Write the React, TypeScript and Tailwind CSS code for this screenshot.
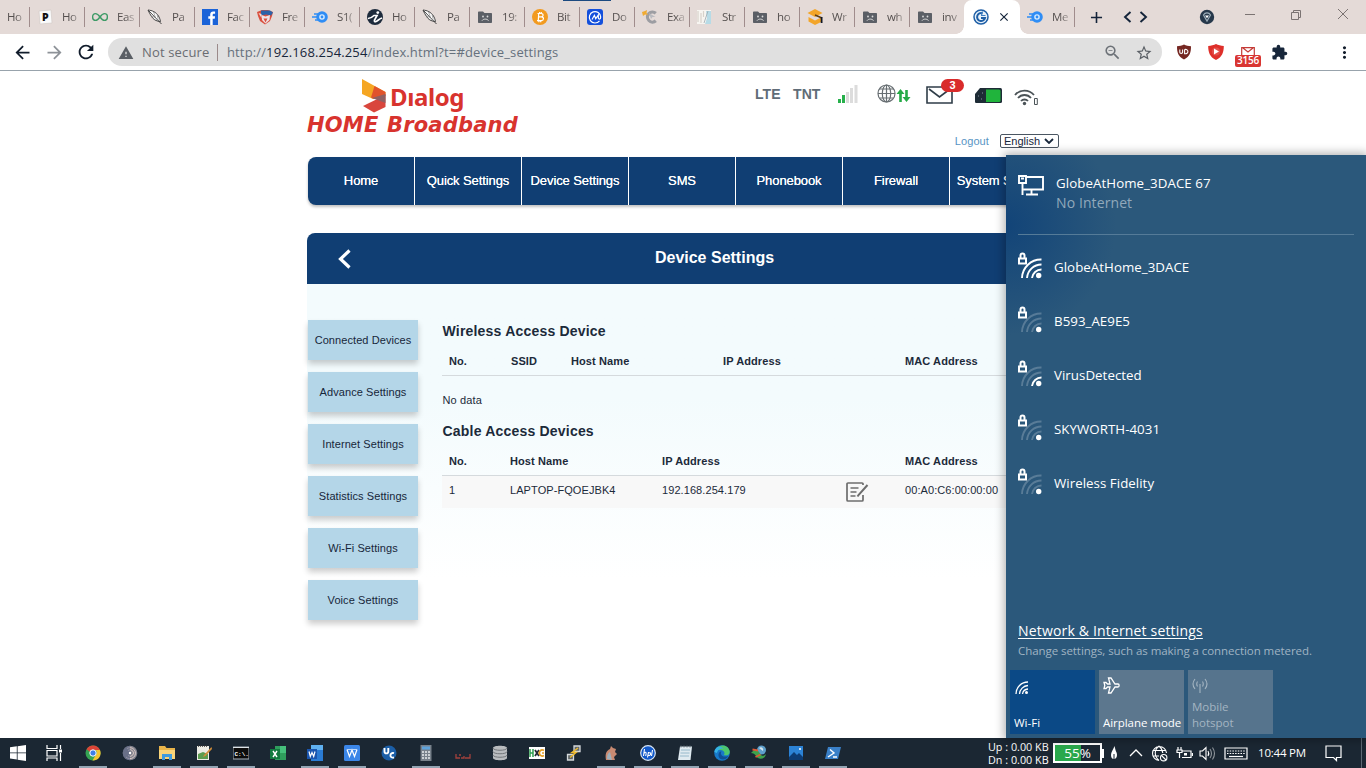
import React from "react";
import {
  MdAdd,
  MdArrowBack,
  MdArrowForward,
  MdClose,
  MdExtension,
  MdMoreVert,
  MdRefresh,
  MdStarBorder,
  MdWarning,
  MdZoomOut,
} from "react-icons/md";

type IconProps = { children: React.ReactNode };

const Icon16 = ({ children }: IconProps) => (
  <svg width="16" height="16" viewBox="0 0 16 16" className="block shrink-0">
    {children}
  </svg>
);

const PageFavicon = () => (
  <Icon16>
    <path d="M2 2l12-1 1 13-12 1z" fill="#fafafa" stroke="#cfc8c4" strokeWidth=".6" />
    <text x="5" y="12" fontSize="10.5" fontWeight="800" fill="#111" fontFamily="Open Sans, sans-serif">P</text>
  </Icon16>
);

const InfinityFavicon = () => (
  <Icon16>
    <path
      d="M8 8c-2-3-3.300-3.400-4.600-3.400C1.600 4.600.6 6.200.6 8s1 3.400 2.800 3.400C4.700 11.400 6 11 8 8s3.300-3.400 4.600-3.400c1.800 0 2.800 1.600 2.800 3.400s-1 3.400-2.800 3.400C11.300 11.400 10 11 8 8z"
      fill="none"
      stroke="#3d9a66"
      strokeWidth="1.400"
    />
  </Icon16>
);

const FeatherFavicon = () => (
  <Icon16>
    <path d="M1 1c4 .4 8 2 10.500 6 1 2 1.800 3.500 2 5.500C9 12.500 6 10 4.500 7.500 3 5.500 2 3 1 1z" fill="#fff" stroke="#444" />
    <path d="M1.500 1.500l13 13.500" stroke="#333" strokeWidth=".9" fill="none" />
    <path d="M6.500 3l2 5.500M10 5.500l1.300 5M4 7l4.500 1.500" stroke="#777" strokeWidth=".6" fill="none" />
  </Icon16>
);

const FacebookFavicon = () => (
  <Icon16>
    <rect width="16" height="16" fill="#1b63d8" />
    <path d="M8.200 16V9.800H6.300V7.200h1.900V5.500c0-2 1.200-3 3-3h1.900v2.300h-1.300c-.8 0-1.100.4-1.100 1.100v1.300h2.400l-.4 2.600h-2V16z" fill="#fff" />
  </Icon16>
);

const ShieldFavicon = () => (
  <Icon16>
    <path d="M0 3l5-2 6 0 5 2-1 4-2 5-5 3.500L3 12 1 7z" fill="#d9503f" />
    <path d="M4 1.500h9l3 2-2 3-5-1-5 1z" fill="#2d62a8" />
    <path d="M4.500 6l4 1.500L13 6l-.5 5-4 3.500L5 11z" fill="#efe3e6" />
    <path d="M6.500 9.500h4l-2 4z" fill="#d9503f" />
    <path d="M1.500 4l3 1v4z" fill="#f7dcd2" />
  </Icon16>
);

const CometFavicon = () => (
  <Icon16>
    <circle cx="10" cy="8" r="4.300" fill="#d8ecff" stroke="#2f8df5" strokeWidth="3" />
    <path d="M0 8h6M2 5h5M3 11h5" stroke="#2f8df5" strokeWidth="1.500" />
    <circle cx="10" cy="8" r="1.400" fill="#2f8df5" />
  </Icon16>
);

const RunnerFavicon = () => (
  <Icon16>
    <circle cx="8" cy="8" r="8" fill="#1d2b3c" />
    <path d="M1 9.500c3 0 4.500-1.500 6-3h3L7.500 11c-.5 1.500.5 2 1.500 1.500 2-.8 3.500-3 6-3.500" stroke="#fff" strokeWidth="1.700" fill="none" />
    <circle cx="10.800" cy="3.600" r="1.400" fill="#fff" />
  </Icon16>
);

const FolderFavicon = () => (
  <Icon16>
    <path d="M1 3.500C1 2.700 1.500 2.400 2 2.400h4l1.500 1.600H14c.7 0 1 .4 1 1V13c0 .6-.4 1-1 1H2c-.6 0-1-.4-1-1z" fill="#5b5f66" />
    <circle cx="6" cy="7.500" r=".9" fill="#ddd" />
    <circle cx="10.500" cy="7.500" r=".9" fill="#ddd" />
    <path d="M5 11.600c1.500-2 5-2 6.500 0" stroke="#ddd" fill="none" />
  </Icon16>
);

const BitcoinFavicon = () => (
  <Icon16>
    <circle cx="8" cy="8" r="8" fill="#f29a1f" />
    <path d="M5.500 4.500h3.800c2.400 0 2.300 3.300 0 3.400H6.600M8 7.900h1.600c2.600 0 2.400 3.700-.2 3.700H5M6.700 4.500l-.4 7M7.600 3v1.500M9.300 3v1.500M6.900 11.600v1.600M8.700 11.600v1.600" stroke="#fff" strokeWidth="1.200" fill="none" />
  </Icon16>
);

const MailAtFavicon = () => (
  <Icon16>
    <rect width="16" height="16" rx="3" fill="#1450dc" />
    <path d="M12.500 11.800A5.700 5.700 0 1 1 13.700 8c0 2.800-2.400 2.500-2.400.5V6L8.700 9.800 7.400 6.300 5 10.500" stroke="#fff" strokeWidth="1.200" fill="none" />
  </Icon16>
);

const CursorFavicon = () => (
  <Icon16>
    <path d="M13.800 4.300A5 5 0 1 0 13.800 11.800" stroke="#9c9da2" strokeWidth="3.200" fill="none" />
    <path d="M0 3l3-1 2-1-.5 3L6 6 3 5.500 1 7z" fill="#f0ab32" />
    <path d="M7 4l2 6 1.500-2 3 0z" fill="#b9babf" />
  </Icon16>
);

const StripesFavicon = () => (
  <Icon16>
    <rect x="0" y="1" width="14" height="14" fill="#f7f5f1" />
    <path d="M1 2v11M4 4v10M6.500 2v6" stroke="#d7d2cb" strokeWidth="1.200" />
    <path d="M9 2h5v13H8l2-6z" fill="#b7dbe6" />
    <path d="M7 14l4-12" stroke="#9aa7ad" strokeWidth=".8" />
  </Icon16>
);

const GraduationFavicon = () => (
  <Icon16>
    <path d="M8 0l7.500 4L8 8 .5 4z" fill="#f3a529" />
    <path d="M1.500 8L8 11.500 14 8.500V13l-6 3-6.500-3.500z" fill="#f3a529" />
    <path d="M8 6l7 3" stroke="#5c3d16" strokeWidth="1.600" />
    <path d="M14.600 8v6" stroke="#111827" strokeWidth="1.800" />
  </Icon16>
);

const RouterFavicon = () => (
  <Icon16>
    <circle cx="8" cy="8" r="7" fill="#e9f2fa" stroke="#1f5fa6" strokeWidth="1.500" />
    <path d="M9.500 4.300A4 4 0 1 0 12 9H8" stroke="#1f5fa6" strokeWidth="2" fill="none" />
    <path d="M8 6.500h4.500M9.500 2.500L8.500 6" stroke="#3f7fc2" strokeWidth="1.200" />
  </Icon16>
);

const TABS = [
  { label: "Ho", icon: null },
  { label: "Ho", icon: <PageFavicon /> },
  { label: "Eas", icon: <InfinityFavicon /> },
  { label: "Pa", icon: <FeatherFavicon /> },
  { label: "Fac", icon: <FacebookFavicon /> },
  { label: "Fre", icon: <ShieldFavicon /> },
  { label: "S1(", icon: <CometFavicon /> },
  { label: "Ho", icon: <RunnerFavicon /> },
  { label: "Pa", icon: <FeatherFavicon /> },
  { label: "19:", icon: <FolderFavicon /> },
  { label: "Bit", icon: <BitcoinFavicon /> },
  { label: "Do", icon: <MailAtFavicon /> },
  { label: "Exa", icon: <CursorFavicon /> },
  { label: "Str", icon: <StripesFavicon /> },
  { label: "ho", icon: <FolderFavicon /> },
  { label: "Wr", icon: <GraduationFavicon /> },
  { label: "wh", icon: <FolderFavicon /> },
  { label: "inv", icon: <FolderFavicon /> },
];

type TabProps = { label: string; icon: React.ReactNode; last?: boolean };

const Tab = ({ label, icon, last }: TabProps) => (
  <div className="relative flex h-[34px] w-[55px] shrink-0 items-center">
    <div className="ml-[8px] w-4">{icon}</div>
    <span className="ml-[9px] w-[20px] whitespace-nowrap text-[11.500px] tracking-[-0.4px] text-[#55504f] [mask-image:linear-gradient(to_right,black_8px,rgba(0,0,0,0.3)_17px)]">
      {label}
    </span>
    {!last && <div className="absolute top-[7px] -right-px h-5 w-px bg-[#a08c8c]" />}
  </div>
);

const TabStrip = () => (
  <div className="relative flex h-[34px] items-center overflow-hidden bg-[#e4dad7]">
    <div className="absolute top-0 left-[563px] h-px w-12 bg-[#1c4a80]" />
    <div className="-ml-[26px] flex">
      {TABS.map((tab, index) => (
        <Tab key={index} label={tab.label} icon={tab.icon} last={index === 17} />
      ))}
      <div className="relative flex h-[34px] w-[56px] items-center rounded-t-lg bg-white">
        <div className="absolute bottom-0 -left-2 size-2 bg-[radial-gradient(circle_at_0_0,transparent_7.500px,white_8px)]" />
        <div className="absolute -right-2 bottom-0 size-2 bg-[radial-gradient(circle_at_100%_0,transparent_7.500px,white_8px)]" />
        <div className="ml-[9px]">
          <RouterFavicon />
        </div>
        <MdClose className="ml-[8px] size-[14px] text-[#14243a]" />
      </div>
      <div className="-ml-px flex">
        <Tab label="Me" icon={<CometFavicon />} />
      </div>
    </div>
    <MdAdd className="ml-[13px] size-[19px] text-[#14243a]" />
    <svg width="25" height="12" viewBox="0 0 25 12" className="ml-[17px]" fill="none" stroke="#14243a" strokeWidth="1.900">
      <path d="M7.500 1L2 6l5.500 5M17.500 1L23 6l-5.500 5" />
    </svg>
    <svg width="16" height="16" viewBox="0 0 16 16" className="ml-[51px]">
      <circle cx="8" cy="8" r="7.200" fill="#26384b" />
      <path d="M4.500 6A4 4 0 0 1 11.500 6L8 12z" fill="none" stroke="#9cadb9" strokeWidth="1.200" />
      <path d="M6 6.500h4l-2 2.800z" fill="#fff" />
    </svg>
    <svg width="106" height="14" viewBox="0 0 106 14" className="-mt-1 ml-[30px]" fill="none" stroke="#7b7372">
      <path d="M0 6.500h10M46.500 4.500h7v7h-7zM48.500 4.500v-2h7v7h-2M93 1l10 10M103 1L93 11" />
    </svg>
  </div>
);

const Toolbar = () => (
  <div className="flex h-[37px] items-center border-b border-[#98a3ac] bg-white">
    <MdArrowBack className="ml-[12px] size-[21px] text-[#111c2b]" />
    <MdArrowForward className="ml-[11px] size-[21px] text-[#8d9298]" />
    <MdRefresh className="ml-[10px] size-[22px] text-[#111c2b]" />
    <div className="ml-[11px] flex h-7 w-[1054px] items-center rounded-full bg-[#e0e0e0] pt-px text-[13px]">
      <MdWarning className="ml-[10px] size-4 text-[#5a5f65]" />
      <span className="ml-[8px] w-[67px] whitespace-nowrap tracking-[0.15px] text-[#6a6d72]">Not secure</span>
      <div className="ml-[8px] h-[17px] w-px bg-[#9b8a8a]" />
      <span className="ml-[9px] whitespace-nowrap tracking-[0.13px] text-[#66717d]">
        http://<span className="text-[#17263a]">192.168.254.254</span>/index.html?t=#device_settings
      </span>
      <MdZoomOut className="mr-[13px] ml-auto size-[19px] text-[#6c7177]" />
      <MdStarBorder className="mr-[9px] size-[18px] text-[#5a5f65]" />
    </div>
    <svg width="16" height="16" viewBox="0 0 16 16" className="ml-[14px]">
      <path d="M8 .5c2 1.200 4.500 1.600 7 1.700 0 6-1 10.300-7 13.300-6-3-7-7.300-7-13.300 2.500-.1 5-.5 7-1.700z" fill="#752722" />
      <path d="M3.800 5.500v2.700c0 1.600 2.800 1.600 2.800 0V5.500M8.600 5.500v4.200c4.400.8 4.400-5 0-4.200" stroke="#fff" strokeWidth="1.100" fill="none" />
    </svg>
    <svg width="16" height="16" viewBox="0 0 16 16" className="ml-4">
      <path d="M8 0c2 1.200 5 1.800 7.800 2 0 6-1.500 11-7.800 14C1.700 13 .2 8 .2 2 3 1.800 6 1.200 8 0z" fill="#de2f2a" />
      <circle cx="8" cy="7.500" r="4" fill="#fff" opacity=".15" />
      <path d="M6 4.500l5 3-5 3z" fill="#fff" />
    </svg>
    <div className="mt-[9px] ml-[11px] flex h-[20px] w-[26px] flex-col items-center">
      <svg width="14" height="8" viewBox="0 0 14 8" className="shrink-0">
        <path d="M.7 8V.7h12.600V8M2 1l5 4 5-4" stroke="#c43a36" strokeWidth="1.200" fill="none" />
      </svg>
      <span className="flex h-[12px] w-[26px] items-center justify-center rounded-[2px] bg-[#d93632] text-[10px] font-semibold tracking-[-0.2px] text-white">
        3156
      </span>
    </div>
    <MdExtension className="ml-[10px] size-[17px] text-[#17263a]" />
    <MdMoreVert className="ml-[47px] size-[19px] text-[#111c2b]" />
  </div>
);

const NAV_ITEMS = ["Home", "Quick Settings", "Device Settings", "SMS", "Phonebook", "Firewall", "System Settings"];

const SIDE_ITEMS = [
  "Connected Devices",
  "Advance Settings",
  "Internet Settings",
  "Statistics Settings",
  "Wi-Fi Settings",
  "Voice Settings",
];

const Logo = () => (
  <div className="w-[230px] pt-[8px] text-[#d8332e]">
    <div className="flex h-[34px] items-start pl-[54px]">
      <svg width="26" height="34" viewBox="0 0 26 34">
        <path d="M1 0l23.500 13v3L12 20 1 15z" fill="#f5a623" />
        <path d="M13.500 7l11 6v4L13 20l-3-1.500z" fill="#e1532c" />
        <path d="M24.500 16v12L13 33.500 2 27z" fill="#d9463d" />
        <path d="M24.500 15v9L11 19z" fill="#8f6063" />
      </svg>
      <span className="ml-[3px] font-['Noto_Sans'] text-[24px] leading-[36px] font-bold tracking-[-0.400px]">Dıalog</span>
    </div>
    <div className="font-['DejaVu_Sans'] text-[21px] leading-[24px] font-bold tracking-[0.2px] [word-spacing:1px] whitespace-nowrap italic">
      HOME Broadband
    </div>
  </div>
);

const StatusIcons = () => (
  <div className="flex h-[30px] items-start text-[14px] font-bold text-[#606c77]">
    <span className="mt-[4px] w-[38px] leading-5 tracking-[0.1px]">LTE</span>
    <span className="mt-[4px] w-[45px] leading-5 tracking-[0.1px]">TNT</span>
    <svg width="20" height="19" viewBox="0 0 20 19" className="mt-[4px]">
      <path d="M0 15h3v4H0zM4 11h3v8H4z" fill="#27b04b" />
      <path d="M8 8h3v11H8zM12 4h3v15h-3zM16.500 1h3v18h-3z" fill="#dcdcdc" />
    </svg>
    <svg width="34" height="20" viewBox="0 0 34 20" className="mt-[4px] ml-[19px]" fill="none">
      <g stroke="#686f73" strokeWidth="1.200">
        <circle cx="9.500" cy="9.500" r="8.500" />
        <ellipse cx="9.500" cy="9.500" rx="4.200" ry="8.500" />
        <path d="M9.500 1v17M1 9.500h17M2.500 5h14M2.500 14h14" />
      </g>
      <path d="M23.500 18V8M29.500 6v10" stroke="#25aa46" strokeWidth="2.600" />
      <path d="M19.500 10l4-5 4 5zM25.500 13l4 5 4-5z" fill="#25aa46" />
    </svg>
    <div className="relative ml-[15px] h-[22px] w-[27px]">
      <svg width="27" height="18" viewBox="0 0 27 18" className="mt-[6px]" fill="none" stroke="#2f3d48" strokeWidth="1.600">
        <path d="M1 1h25v16H1zM3 3l10.500 8L24 3" />
      </svg>
      <span className="absolute -top-[1px] left-[15px] flex h-[13px] w-[23px] items-center justify-center rounded-full bg-[#d92b2b] text-[11px] text-white">
        3
      </span>
    </div>
    <svg width="29" height="17" viewBox="0 0 29 17" className="mt-[7px] ml-[21px]">
      <path d="M6 1h20.500Q28 1 28 3v11.500q0 1.500-1.500 1.500H2Q1 16 1 14.500V7z" fill="#1e2c36" />
      <path d="M12 2.500h13q1.500 0 1.500 1.500v9.500q0 1.500-1.500 1.500H12z" fill="#20b43c" />
      <path d="M4 9h1M8 6h1M7 12h1" stroke="#8494a0" />
    </svg>
    <svg width="25" height="18" viewBox="0 0 25 18" className="mt-[9px] ml-[11px]" fill="none" stroke="#4b5357" strokeWidth="1.800">
      <path d="M1 6a12.500 12.500 0 0 1 19 0M4 9a8.500 8.500 0 0 1 13 0M7 12a4.800 4.800 0 0 1 7 0" />
      <circle cx="10.500" cy="14.500" r="1.700" fill="#4b5357" stroke="none" />
      <path d="M20.500 9.500h2.800v6h-2.800z" strokeWidth="1" />
    </svg>
  </div>
);

const DeviceTables = () => (
  <div className="mt-[36px] ml-[24px] w-[672px] text-[11px] text-[#1c2a3a]">
    <h2 className="ml-[0.500px] h-[22px] text-[14px] leading-[22px] font-bold tracking-[0.200px]">Wireless Access Device</h2>
    <div className="mt-[8px] grid h-[26px] grid-cols-[62px_60px_152px_182px_1fr] border-b border-[#d5dadd] pl-[7px] leading-[22px] font-bold tracking-[0.1px]">
      <span>No.</span>
      <span>SSID</span>
      <span>Host Name</span>
      <span>IP Address</span>
      <span>MAC Address</span>
    </div>
    <p className="mt-[13px] ml-[0.500px] h-[22px] leading-[22px] tracking-[0.150px]">No data</p>
    <h2 className="mt-[9px] ml-[0.500px] h-[22px] text-[14px] leading-[22px] font-bold tracking-[0.200px]">Cable Access Devices</h2>
    <div className="mt-[8px] grid h-[26px] grid-cols-[61px_152px_243px_1fr] border-b border-[#d5dadd] pl-[7px] leading-[22px] font-bold tracking-[0.1px]">
      <span>No.</span>
      <span>Host Name</span>
      <span>IP Address</span>
      <span>MAC Address</span>
    </div>
    <div className="grid h-[32px] grid-cols-[61px_152px_183px_60px_1fr] bg-[#f8f8f8] pl-[7px] leading-[29px] tracking-[0.080px]">
      <span>1</span>
      <span>LAPTOP-FQOEJBK4</span>
      <span>192.168.254.179</span>
      <svg width="23" height="20" viewBox="0 0 23 20" className="mt-[6px] ml-px" fill="none" stroke="#6d6d6d" strokeWidth="1.700">
        <path d="M17 3V2q0-1-1-1H2Q1 1 1 2v16q0 1 1 1h14q1 0 1-1v-5" />
        <path d="M4.500 6h8M4.500 10h6M4.500 14h5" strokeWidth="1.400" />
        <path d="M21.500 3l-9 10-1 1.500" strokeWidth="2" />
      </svg>
      <span>00:A0:C6:00:00:00</span>
    </div>
  </div>
);

const RouterPage = () => (
  <main className="h-full bg-white pl-[307px] font-['Liberation_Sans',sans-serif]">
    <div className="flex h-[60px] w-[755px]">
      <Logo />
      <div className="ml-[218px] pt-[9px]">
        <StatusIcons />
      </div>
    </div>
    <div className="flex h-[26px] w-[752px] items-start justify-end pt-[3px] text-[11px]">
      <a className="-mt-px mr-[11px] leading-[16px] tracking-[0.1px] text-[#5794c4]">Logout</a>
      <div className="flex h-[14px] w-[59px] items-center rounded-[2px] border border-[#4b5662] pl-[3px] text-[#17263a]">
        English
        <svg width="10" height="6" viewBox="0 0 10 6" className="ml-[4px]" fill="none" stroke="#17263a" strokeWidth="1.800">
          <path d="M1 1l4 4 4-4" />
        </svg>
      </div>
    </div>
    <nav className="ml-[1px] flex h-[48px] w-[814px] overflow-hidden rounded-lg bg-[#103e73] shadow-[0_2px_3px_rgba(0,0,0,0.25)]">
      {NAV_ITEMS.map((item) => (
        <div key={item} className="flex h-full w-[107px] shrink-0 justify-center border-r border-white text-[13px] leading-[47px] font-normal tracking-[-0.1px] whitespace-nowrap text-white [text-shadow:0_0_0.5px_white]">
          {item}
        </div>
      ))}
    </nav>
    <section className="mt-[28px] w-[815px]">
      <div className="flex h-[51px] items-center rounded-t-lg bg-[#103e73] text-white">
        <svg width="13" height="20" viewBox="0 0 13 20" className="ml-[31px] w-[13px]" fill="none" stroke="white" strokeWidth="3.200">
          <path d="M11.500 1.500L2.500 10l9 8.500" />
        </svg>
        <h1 className="mr-[44px] -mt-[1px] flex-1 text-center text-[16px] font-bold">Device Settings</h1>
      </div>
      <div className="flex h-[454px] bg-linear-to-b from-[#f3fbfd] from-25% to-white to-65%">
        <div className="mt-[36px] ml-[1px] flex w-[110px] flex-col gap-3">
          {SIDE_ITEMS.map((item) => (
            <div key={item} className="h-[40px] bg-[#b4d6e8] text-center text-[11px] leading-[40px] tracking-[0.080px] whitespace-nowrap text-[#17263a] shadow-[0_4px_6px_rgba(0,0,0,0.2)]">
              {item}
            </div>
          ))}
        </div>
        <DeviceTables />
      </div>
    </section>
  </main>
);

type NetworkIconProps = { bars: number };

const NetworkIcon = ({ bars }: NetworkIconProps) => (
  <svg width="25" height="28" viewBox="0 0 25 28" className="-mt-[3px]" fill="none" stroke="white" strokeWidth="1.900">
    <path d="M1 6.500h7v5H1zM2.500 6V3.500a2 2 0 0 1 4 0V6" strokeWidth="2" />
    <path d="M4 26A19 19 0 0 1 23.500 7.500" opacity={bars > 2 ? 1 : 0.22} />
    <path d="M9 26A14.500 14.500 0 0 1 23.500 12.500" opacity={bars > 1 ? 1 : 0.22} />
    <path d="M14 26A9.500 9.500 0 0 1 23.500 17.500" opacity={bars > 0 ? 1 : 0.22} />
    <circle cx="20.700" cy="23.500" r="2.700" fill="white" stroke="none" />
  </svg>
);

const NETWORKS = [
  { name: "GlobeAtHome_3DACE", bars: 3 },
  { name: "B593_AE9E5", bars: 0 },
  { name: "VirusDetected", bars: 1 },
  { name: "SKYWORTH-4031", bars: 0 },
  { name: "Wireless Fidelity", bars: 0 },
];

const NetworkPanel = () => (
  <aside className="absolute top-[155px] left-[1006px] flex h-[583px] w-[360px] flex-col bg-[#2b587b] bg-[radial-gradient(circle_at_0_70px,#124478_0,#2b587b_110px)] text-[13.300px] text-white shadow-[0_0_9px_2px_rgba(0,0,0,0.3)]">
    <div className="mx-3 flex h-[80px] border-b border-[#557b98] pt-[18px]">
      <svg width="26" height="21" viewBox="0 0 26 21" className="mt-[2px]" fill="none" stroke="white" strokeWidth="1.900">
        <path d="M8 2h17v12.500H5.500M13.500 15v4M8 19.500h12M1 1h7v7H1zM4.500 8v12M3 3.500h3" />
      </svg>
      <div className="ml-[12px]">
        <p className="leading-[20px] tracking-[0.07px]">GlobeAtHome_3DACE 67</p>
        <p className="text-[14px] leading-[20px] tracking-[0.1px] text-[#91a9bb]">No Internet</p>
      </div>
    </div>
    <div className="mt-[5px] flex-1 pl-3">
      {NETWORKS.map((network) => (
        <div key={network.name} className="flex h-[54px] items-center">
          <NetworkIcon bars={network.bars} />
          <span className="mt-[2px] ml-[11px] tracking-[0.04px]">{network.name}</span>
        </div>
      ))}
    </div>
    <div className="h-[48px] pl-3">
      <p className="text-[14px] leading-[20px] tracking-[0.17px] underline underline-offset-2">Network &amp; Internet settings</p>
      <p className="text-[11.500px] leading-[20px] tracking-[-0.06px] whitespace-nowrap text-[#a0b4c3]">
        Change settings, such as making a connection metered.
      </p>
    </div>
    <div className="mt-px mb-[4px] flex h-[64px] shrink-0 gap-1 pl-1 text-[11.500px] leading-[16px]">
      <div className="flex w-[85px] flex-col justify-between bg-[#0b4986] px-1 pt-[11px] pb-[3px]">
        <svg width="15" height="14" viewBox="0 0 15 14" className="ml-[1px]" fill="none" stroke="white" strokeWidth="1.300">
          <path d="M1 13A12 12 0 0 1 13 1M4.500 13A9 9 0 0 1 13 4.500M7.500 13A6 6 0 0 1 13 8" />
          <circle cx="11.500" cy="11.500" r="1.500" fill="white" stroke="none" />
        </svg>
        Wi-Fi
      </div>
      <div className="flex w-[85px] flex-col justify-between bg-[#5c778e] px-1 pt-[7px] pb-[3px] whitespace-nowrap">
        <svg width="17" height="17" viewBox="0 0 17 17" fill="none" stroke="white" strokeWidth="1.300">
          <path d="M1 5.500h2l1.500 1.500H7L5.500 1H8l4 6h3c1.500 0 1.500 3 0 3h-3l-4 6H5.500L7 10H4.500L3 11.500H1l.8-3z" />
        </svg>
        <span className="tracking-[-0.04px]">Airplane mode</span>
      </div>
      <div className="flex w-[85px] flex-col justify-between bg-[#56748d] px-1 pt-[8px] pb-[3px] text-[#a4b5c2]">
        <svg width="16" height="15" viewBox="0 0 16 15" fill="none" stroke="#a4b5c2" strokeWidth="1.100">
          <path d="M8 6v9M5.500 3.500q-1.500 2.500 0 5M10.500 3.500q1.500 2.500 0 5M3 1q-4 5 0 10M13 1q4 5 0 10" />
        </svg>
        <span>
          Mobile
          <br />
          hotspot
        </span>
      </div>
    </div>
  </aside>
);

const TASKBAR_APPS = [
  {
    running: true,
    icon: (
      <>
        <circle cx="8" cy="8" r="7.500" fill="#35a352" />
        <path d="M8 .5A7.500 7.500 0 0 1 15 5H8a3 3 0 0 0-2.800 2L1.500 4.300A7.500 7.500 0 0 1 8 .5z" fill="#dc4437" />
        <path d="M15 5a7.500 7.500 0 0 1-7.500 10.500L11 9.500A3 3 0 0 0 10.500 5z" fill="#f4c430" />
        <circle cx="8" cy="8" r="3.200" fill="#3f7fe8" stroke="#fff" />
      </>
    ),
  },
  {
    running: false,
    icon: (
      <>
        <circle cx="8" cy="8" r="7.300" fill="#84848f" />
        <path d="M5 3.500a5.500 5.500 0 1 1-1 8.500M6 5.500a3.300 3.300 0 1 1 0 5" stroke="#d9c8c2" fill="none" />
        <path d="M8 .7A7.300 7.300 0 0 0 8 15.300z" fill="#4d5b82" opacity=".5" />
        <circle cx="8" cy="8" r="1.200" fill="#fff" />
      </>
    ),
  },
  {
    running: true,
    icon: (
      <>
        <path d="M0 1h6l1.500 2H16v11H0z" fill="#e9b44a" />
        <path d="M0 5h16v9H0z" fill="#f8d47a" />
        <path d="M3 15V9h10v6h-3v-3H6v3z" fill="#3e9be0" />
      </>
    ),
  },
  {
    running: true,
    icon: (
      <>
        <path d="M1 1h12v14H1z" fill="#ecebe4" />
        <path d="M2 1h10" stroke="#333" strokeWidth="1.500" strokeDasharray="1 1" />
        <path d="M2 9l5-2 5 2v5H2z" fill="#5c9c4f" />
        <path d="M15.500 2L8 10l-1 2 2.500-1L16 4z" fill="#d18d3a" />
      </>
    ),
  },
  {
    running: true,
    icon: (
      <>
        <path d="M0 2h16v12H0z" fill="#0c0c0c" stroke="#aab3bb" />
        <path d="M0 2.500h16" stroke="#dde3e8" />
        <text x="1.500" y="11" fontSize="6" fontWeight="700" fill="#fff" fontFamily="Liberation Mono, monospace">C:\.</text>
      </>
    ),
  },
  {
    running: false,
    icon: (
      <>
        <path d="M5 1h11v14H5z" fill="#2f9d5c" />
        <path d="M10 1h6v7h-6z" fill="#46c07c" />
        <path d="M0 4h10v10H0z" fill="#127a3f" />
        <path d="M3 6l4 6M7 6l-4 6" stroke="#fff" strokeWidth="1.400" />
      </>
    ),
  },
  {
    running: true,
    icon: (
      <>
        <path d="M4 0h12v16H4z" fill="#2a7bd4" />
        <path d="M4 0h12v5H4z" fill="#5fb0f0" />
        <path d="M0 4h10v10H0z" fill="#1a55ae" />
        <path d="M2 6.500l1.300 5L5 7.500l1.700 4L8 6.500" stroke="#fff" strokeWidth="1.200" fill="none" />
      </>
    ),
  },
  {
    running: true,
    icon: (
      <>
        <rect width="16" height="16" rx="1.500" fill="#3b86e8" />
        <path d="M3 4.500l2.500 7L8 5l2.500 6.500 2.500-7" stroke="#fff" strokeWidth="1.200" fill="none" />
        <path d="M3 4.500h10" stroke="#bcd7fa" />
      </>
    ),
  },
  {
    running: false,
    icon: (
      <>
        <circle cx="8" cy="8" r="7.500" fill="#1b5ea7" />
        <path d="M3.500 3v3.500c0 2.500 3.800 2.500 3.800 0V3M13 8.200c-4.500-1.500-5 5.500 0 4.300" stroke="#fff" strokeWidth="1.900" fill="none" />
      </>
    ),
  },
  {
    running: true,
    icon: (
      <>
        <path d="M2.500 0h11v16h-11z" fill="#77818b" />
        <path d="M4 1.500h8v3H4z" fill="#5ea3dc" />
        <path d="M4 7h8M4 10h8M4 13h8" stroke="#e7ebee" strokeWidth="1.700" strokeDasharray="2 1" />
      </>
    ),
  },
  {
    running: false,
    icon: (
      <path d="M1 9v4h4M6 13h3v-2M10 13h5V9M4 10h2" stroke="#a3413d" strokeWidth="1.300" fill="none" />
    ),
  },
  {
    running: false,
    icon: (
      <>
        <path d="M1 3c0-3 14-3 14 0v10c0 3-14 3-14 0z" fill="#b9bcbf" />
        <path d="M1 3c0 3 14 3 14 0M1 6.500c0 3 14 3 14 0M1 10c0 3 14 3 14 0" stroke="#73777b" fill="none" />
      </>
    ),
  },
  {
    running: false,
    icon: (
      <>
        <path d="M0 2h16v12H0z" fill="#fff" />
        <path d="M1 4v8M4 4v8M1 8h3" stroke="#2f9e4f" strokeWidth="1.500" />
        <path d="M6 5l4 6M10 5l-4 6" stroke="#232a33" strokeWidth="1.800" />
        <path d="M15 5.500a3 3 0 1 0 0 5M13 8h2" stroke="#e7a025" strokeWidth="1.700" fill="none" />
      </>
    ),
  },
  {
    running: false,
    icon: (
      <>
        <path d="M8 1h6v5.500H8zM1.500 9.500h6V15h-6z" fill="#5d6468" stroke="#d5d9dc" strokeWidth="1.300" />
        <path d="M12 3L6 7.500h4L4 12.500" stroke="#edb92e" strokeWidth="1.500" fill="none" />
      </>
    ),
  },
  {
    running: true,
    icon: (
      <>
        <path d="M3 15C2 9 3 6 7 4l1-3 2 2 3 1-1 3 2 2-3 3 1 3z" fill="#c88a72" />
        <path d="M4 14c0-4 1-6 3-7l2 8z" fill="#9fb0bb" />
      </>
    ),
  },
  {
    running: true,
    icon: (
      <>
        <circle cx="8" cy="8" r="7.300" fill="#1259c9" stroke="#d8e6f5" strokeWidth="1.200" />
        <path d="M4.500 4l-1 7M4 8.500c1.500-2 2.500-1.500 2 1l-.3 1.500M8.500 7l-1 5.500M8.400 8c3-1.500 3 3-.2 2.500M12.500 5l-1 6" stroke="#fff" strokeWidth="1.100" fill="none" />
      </>
    ),
  },
  {
    running: true,
    icon: (
      <>
        <path d="M3 1.500h12L13.500 15H1z" fill="#dfeaf0" />
        <path d="M4 5h9M3.500 8h9M3 11h9" stroke="#8fb4c6" strokeWidth=".9" />
        <path d="M4 .5v2M7 .5v2M10 .5v2M13 .5v2" stroke="#64727b" strokeWidth=".9" />
      </>
    ),
  },
  {
    running: true,
    icon: (
      <>
        <circle cx="8" cy="8" r="7.800" fill="#1879c9" />
        <path d="M2 4C5-1 14-1 15.700 6c.5 4-3 5-6 4 2-2 0-5-3-5-2 0-4 0-4.700-1z" fill="#4cc76e" />
        <path d="M.3 7C1 2 6 0 9.500 3.500 5 3 3.500 6 3 8z" fill="#36b3e6" />
        <path d="M7 9c1 3 4 3 7.500 2-3 5-9 4.500-10 0C4 8 6 6 7.500 6.500 7 7.500 6.700 8 7 9z" fill="#0f4f96" />
      </>
    ),
  },
  {
    running: true,
    icon: (
      <>
        <circle cx="10.500" cy="5" r="4.500" fill="#5e9fcb" />
        <path d="M8 3c2-2 5 0 4 3z" fill="#d9e8ef" />
        <path d="M0 8c4-5 7-3 9 .5s4 2.500 6 .5c-1 6-8 6-10 2-1-2-3-3-5-3z" fill="#3ea24b" />
        <path d="M1.500 4.500l5.500 1M4.500 12l5-2.500" stroke="#da5c36" strokeWidth="1.900" />
      </>
    ),
  },
  {
    running: true,
    icon: (
      <>
        <path d="M1 1h14v14H1z" fill="#2c83d6" />
        <path d="M1 12l5-5 3 3 2-2 4 4v3H1z" fill="#0d3c74" />
        <circle cx="12" cy="4" r="1" fill="#fff" />
      </>
    ),
  },
  {
    running: true,
    icon: (
      <>
        <path d="M3 2h13l-3 12H0z" fill="#3a80c8" />
        <path d="M5 4.500l4 3.500-6 4M8 12h4" stroke="#fff" strokeWidth="1.400" fill="none" />
      </>
    ),
  },
];

const Tray = () => (
  <div className="ml-auto flex h-full items-center text-white">
    <div className="-mt-px w-[65px] text-[10.800px] leading-[13px] whitespace-nowrap">
      <p>Up : 0.00 KB</p>
      <p>Dn : 0.00 KB</p>
    </div>
    <div className="flex items-center">
      <div className="flex h-[20px] w-[49px] items-center justify-center border-2 border-white bg-[linear-gradient(to_right,#29a84c_57%,#1b2733_57%)] text-[13.500px]">
        55%
      </div>
      <div className="h-[9px] w-[2px] bg-white" />
    </div>
    <svg width="8" height="14" viewBox="0 0 8 14" className="ml-[6px]">
      <path d="M4.500 0C3 4 1 6 1 9s1.500 4 3 4 3-1.500 3-4-1-3-1.500-5z" fill="white" />
      <path d="M4 8v6" stroke="#1b2733" />
    </svg>
    <svg width="14" height="8" viewBox="0 0 14 8" className="ml-[11px]" fill="none" stroke="white" strokeWidth="1.300">
      <path d="M1 7l6-6 6 6" />
    </svg>
    <svg width="17" height="17" viewBox="0 0 17 17" className="ml-[8px]" fill="none" stroke="white" strokeWidth="1.100">
      <path d="M15.500 8A7 7 0 1 0 8 15.500M8 1c-5 4-5 10 0 14.500M8 1c2.500 2 3.500 4.500 3.800 7M1.500 5.500h13M1.500 11H8" />
      <circle cx="12.700" cy="12.700" r="3.200" />
      <path d="M10.500 10.500l4.500 4.500" />
    </svg>
    <svg width="17" height="12" viewBox="0 0 17 12" className="ml-[8px]" fill="none" stroke="white" strokeWidth="1.200">
      <path d="M6 4h9v6.500H6M2 0v3M5 0v3M1 3h5v2.500H1zM3.500 6v5M16.500 6v3" />
      <path d="M8 6h3v2.500H8z" fill="white" stroke="none" />
    </svg>
    <svg width="17" height="15" viewBox="0 0 17 15" className="ml-[6px]" fill="none" stroke="white" strokeWidth="1.100">
      <path d="M1 5h2.500L7 1.500v12L3.500 10H1zM9 5q1.500 2.500 0 5" />
      <path d="M11 3q3 4.500 0 9M13.500 1.500q4 6 0 12" opacity=".5" />
    </svg>
    <svg width="24" height="13" viewBox="0 0 24 13" className="ml-[8px]" fill="none" stroke="white" strokeWidth="1.200">
      <path d="M1 1h22v11H1z" />
      <path d="M3 4h18M3 6.500h18" strokeDasharray="1.500 1.200" />
      <path d="M5 9.500h14" />
    </svg>
    <span className="ml-[10px] w-[49px] text-[11.500px] tracking-[-0.2px] whitespace-nowrap">10:44 PM</span>
    <svg width="17" height="17" viewBox="0 0 17 17" className="ml-[18px]" fill="none" stroke="white" strokeWidth="1.200">
      <path d="M1 1h15v11.500h-4.500v3l-3-3H1z" />
    </svg>
    <div className="mr-[4px] ml-[19px] h-full w-px bg-[#5c6974]" />
  </div>
);

const Taskbar = () => (
  <footer className="flex h-[30px] items-center bg-[#1b2733]">
    <svg width="16" height="16" viewBox="0 0 16 16" className="ml-[10px]" fill="white">
      <path d="M0 2.300L6.800 1.300v6.200H0zM7.600 1.200L16 0v7.500H7.600zM0 8.300h6.800v6.200L0 13.600zM7.600 8.300H16V16l-8.400-1.300z" />
    </svg>
    <svg width="17" height="16" viewBox="0 0 17 16" className="ml-[20px]" fill="none" stroke="white" strokeWidth="1.200">
      <path d="M1 0v3.500h10V0M1 5.500h10v5.500H1zM1 16v-3h10v3M14.500 0v4M14.500 8v8" />
      <path d="M13 4.500h3v3h-3z" fill="white" stroke="none" />
    </svg>
    <div className="ml-[11px] flex h-full">
      {TASKBAR_APPS.map((app, index) => (
        <div key={index} className="flex h-full w-[37px] flex-col items-center pt-[7px]">
          <Icon16>{app.icon}</Icon16>
          {app.running && <div className="mt-auto h-[2px] w-7 bg-[#93a4b3]" />}
        </div>
      ))}
    </div>
    <Tray />
  </footer>
);

const App = () => {
  return (
    <div className="relative flex h-[768px] w-[1366px] flex-col overflow-hidden font-['Open_Sans','Noto_Sans',sans-serif]">
      <TabStrip />
      <Toolbar />
      <div className="min-h-0 flex-1 overflow-hidden">
        <RouterPage />
      </div>
      <NetworkPanel />
      <Taskbar />
    </div>
  );
};

export default App;
